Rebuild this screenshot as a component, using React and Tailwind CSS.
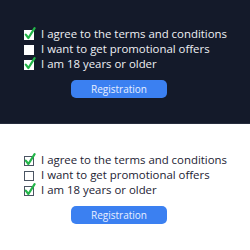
const items = [
  { label: "I agree to the terms and conditions", checked: true },
  { label: "I want to get promotional offers", checked: false },
  { label: "I am 18 years or older", checked: true },
];

function Box({ checked, dark }) {
  return (
    <svg width="14" height="14" viewBox="0 0 14 14" className="shrink-0">
      {dark ? (
        <rect x="1" y="3" width="10" height="10" fill="#ffffff" />
      ) : (
        <rect x="1.5" y="3.5" width="9" height="9" fill="#ffffff" stroke="#4b5563" strokeWidth="1" />
      )}
      {checked && (
        <path d="M2.8 7.6 L5.4 11 L11.6 1.2" fill="none" stroke="#22b548" strokeWidth="2.2" strokeLinecap="round" strokeLinejoin="round" />
      )}
    </svg>
  );
}

function Panel({ dark }) {
  return (
    <div
      className={
        dark
          ? "h-[124px] bg-[#141a2a] border-b border-[#252c3d] pt-[26px] pl-[23px]"
          : "h-[126px] bg-white pt-[28px] pl-[23px]"
      }
    >
      <div className="flex flex-col">
        {items.map((it) => (
          <div key={it.label} className="flex items-center h-[15px] gap-[4px]">
            <Box checked={it.checked} dark={dark} />
            <span
              className={
                "text-[11.4px] leading-[15px] whitespace-nowrap " +
                (dark ? "text-[#eef0f4]" : "text-[#1c2233]")
              }
            >
              {it.label}
            </span>
          </div>
        ))}
      </div>
      <div className="flex mt-[9px] pl-[48px]">
        <button className="w-[96px] h-[18px] rounded-[5px] bg-[#3b80f1] text-[#e8efff] text-[10px] leading-[18px]">
          Registration
        </button>
      </div>
    </div>
  );
}

export default function App() {
  return (
    <div className="w-[250px] h-[250px] overflow-hidden bg-white" style={{ fontFamily: '"Open Sans", sans-serif' }}>
      <Panel dark />
      <Panel />
    </div>
  );
}
